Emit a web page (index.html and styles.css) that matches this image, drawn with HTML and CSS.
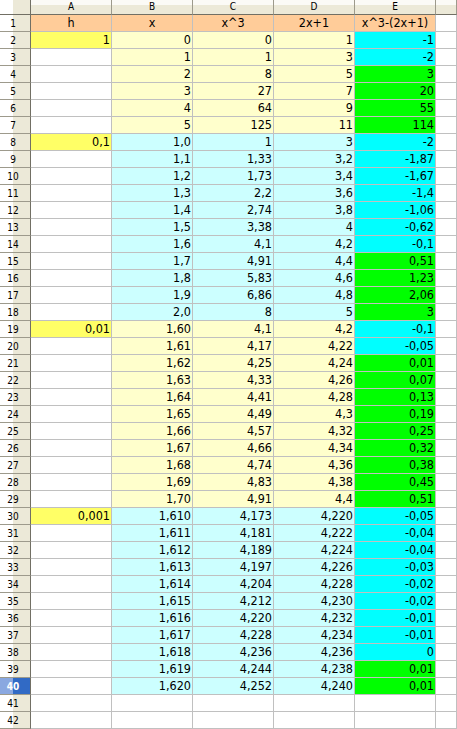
FILE: index.html
```html
<!DOCTYPE html>
<html>
<head>
<meta charset="utf-8">
<link rel="stylesheet" href="styles.css">
</head>
<body>
<div class="sheet">
  <div class="corner"></div><div class="ch">A</div><div class="ch">B</div><div class="ch">C</div><div class="ch">D</div><div class="ch">E</div><div class="ch"></div>

  <div class="rh">1</div><div class="c t or">h</div><div class="c t or">x</div><div class="c t or">x^3</div><div class="c t or">2x+1</div><div class="c t or">x^3-(2x+1)</div><div class="c"></div>

  <div class="rh">2</div><div class="c ye">1</div><div class="c ly">0</div><div class="c ly">0</div><div class="c ly">1</div><div class="c cy">-1</div><div class="c"></div>
  <div class="rh">3</div><div class="c"></div><div class="c ly">1</div><div class="c ly">1</div><div class="c ly">3</div><div class="c cy">-2</div><div class="c"></div>
  <div class="rh">4</div><div class="c"></div><div class="c ly">2</div><div class="c ly">8</div><div class="c ly">5</div><div class="c gr">3</div><div class="c"></div>
  <div class="rh">5</div><div class="c"></div><div class="c ly">3</div><div class="c ly">27</div><div class="c ly">7</div><div class="c gr">20</div><div class="c"></div>
  <div class="rh">6</div><div class="c"></div><div class="c ly">4</div><div class="c ly">64</div><div class="c ly">9</div><div class="c gr">55</div><div class="c"></div>
  <div class="rh">7</div><div class="c"></div><div class="c ly">5</div><div class="c ly">125</div><div class="c ly">11</div><div class="c gr">114</div><div class="c"></div>

  <div class="rh">8</div><div class="c ye">0,1</div><div class="c lc">1,0</div><div class="c lc">1</div><div class="c lc">3</div><div class="c cy">-2</div><div class="c"></div>
  <div class="rh">9</div><div class="c"></div><div class="c lc">1,1</div><div class="c lc">1,33</div><div class="c lc">3,2</div><div class="c cy">-1,87</div><div class="c"></div>
  <div class="rh">10</div><div class="c"></div><div class="c lc">1,2</div><div class="c lc">1,73</div><div class="c lc">3,4</div><div class="c cy">-1,67</div><div class="c"></div>
  <div class="rh">11</div><div class="c"></div><div class="c lc">1,3</div><div class="c lc">2,2</div><div class="c lc">3,6</div><div class="c cy">-1,4</div><div class="c"></div>
  <div class="rh">12</div><div class="c"></div><div class="c lc">1,4</div><div class="c lc">2,74</div><div class="c lc">3,8</div><div class="c cy">-1,06</div><div class="c"></div>
  <div class="rh">13</div><div class="c"></div><div class="c lc">1,5</div><div class="c lc">3,38</div><div class="c lc">4</div><div class="c cy">-0,62</div><div class="c"></div>
  <div class="rh">14</div><div class="c"></div><div class="c lc">1,6</div><div class="c lc">4,1</div><div class="c lc">4,2</div><div class="c cy">-0,1</div><div class="c"></div>
  <div class="rh">15</div><div class="c"></div><div class="c lc">1,7</div><div class="c lc">4,91</div><div class="c lc">4,4</div><div class="c gr">0,51</div><div class="c"></div>
  <div class="rh">16</div><div class="c"></div><div class="c lc">1,8</div><div class="c lc">5,83</div><div class="c lc">4,6</div><div class="c gr">1,23</div><div class="c"></div>
  <div class="rh">17</div><div class="c"></div><div class="c lc">1,9</div><div class="c lc">6,86</div><div class="c lc">4,8</div><div class="c gr">2,06</div><div class="c"></div>
  <div class="rh">18</div><div class="c"></div><div class="c lc">2,0</div><div class="c lc">8</div><div class="c lc">5</div><div class="c gr">3</div><div class="c"></div>

  <div class="rh">19</div><div class="c ye">0,01</div><div class="c ly">1,60</div><div class="c ly">4,1</div><div class="c ly">4,2</div><div class="c cy">-0,1</div><div class="c"></div>
  <div class="rh">20</div><div class="c"></div><div class="c ly">1,61</div><div class="c ly">4,17</div><div class="c ly">4,22</div><div class="c cy">-0,05</div><div class="c"></div>
  <div class="rh">21</div><div class="c"></div><div class="c ly">1,62</div><div class="c ly">4,25</div><div class="c ly">4,24</div><div class="c gr">0,01</div><div class="c"></div>
  <div class="rh">22</div><div class="c"></div><div class="c ly">1,63</div><div class="c ly">4,33</div><div class="c ly">4,26</div><div class="c gr">0,07</div><div class="c"></div>
  <div class="rh">23</div><div class="c"></div><div class="c ly">1,64</div><div class="c ly">4,41</div><div class="c ly">4,28</div><div class="c gr">0,13</div><div class="c"></div>
  <div class="rh">24</div><div class="c"></div><div class="c ly">1,65</div><div class="c ly">4,49</div><div class="c ly">4,3</div><div class="c gr">0,19</div><div class="c"></div>
  <div class="rh">25</div><div class="c"></div><div class="c ly">1,66</div><div class="c ly">4,57</div><div class="c ly">4,32</div><div class="c gr">0,25</div><div class="c"></div>
  <div class="rh">26</div><div class="c"></div><div class="c ly">1,67</div><div class="c ly">4,66</div><div class="c ly">4,34</div><div class="c gr">0,32</div><div class="c"></div>
  <div class="rh">27</div><div class="c"></div><div class="c ly">1,68</div><div class="c ly">4,74</div><div class="c ly">4,36</div><div class="c gr">0,38</div><div class="c"></div>
  <div class="rh">28</div><div class="c"></div><div class="c ly">1,69</div><div class="c ly">4,83</div><div class="c ly">4,38</div><div class="c gr">0,45</div><div class="c"></div>
  <div class="rh">29</div><div class="c"></div><div class="c ly">1,70</div><div class="c ly">4,91</div><div class="c ly">4,4</div><div class="c gr">0,51</div><div class="c"></div>

  <div class="rh">30</div><div class="c ye">0,001</div><div class="c lc">1,610</div><div class="c lc">4,173</div><div class="c lc">4,220</div><div class="c cy">-0,05</div><div class="c"></div>
  <div class="rh">31</div><div class="c"></div><div class="c lc">1,611</div><div class="c lc">4,181</div><div class="c lc">4,222</div><div class="c cy">-0,04</div><div class="c"></div>
  <div class="rh">32</div><div class="c"></div><div class="c lc">1,612</div><div class="c lc">4,189</div><div class="c lc">4,224</div><div class="c cy">-0,04</div><div class="c"></div>
  <div class="rh">33</div><div class="c"></div><div class="c lc">1,613</div><div class="c lc">4,197</div><div class="c lc">4,226</div><div class="c cy">-0,03</div><div class="c"></div>
  <div class="rh">34</div><div class="c"></div><div class="c lc">1,614</div><div class="c lc">4,204</div><div class="c lc">4,228</div><div class="c cy">-0,02</div><div class="c"></div>
  <div class="rh">35</div><div class="c"></div><div class="c lc">1,615</div><div class="c lc">4,212</div><div class="c lc">4,230</div><div class="c cy">-0,02</div><div class="c"></div>
  <div class="rh">36</div><div class="c"></div><div class="c lc">1,616</div><div class="c lc">4,220</div><div class="c lc">4,232</div><div class="c cy">-0,01</div><div class="c"></div>
  <div class="rh">37</div><div class="c"></div><div class="c lc">1,617</div><div class="c lc">4,228</div><div class="c lc">4,234</div><div class="c cy">-0,01</div><div class="c"></div>
  <div class="rh">38</div><div class="c"></div><div class="c lc">1,618</div><div class="c lc">4,236</div><div class="c lc">4,236</div><div class="c cy">0</div><div class="c"></div>
  <div class="rh">39</div><div class="c"></div><div class="c lc">1,619</div><div class="c lc">4,244</div><div class="c lc">4,238</div><div class="c gr">0,01</div><div class="c"></div>
  <div class="rh sel">40</div><div class="c"></div><div class="c lc">1,620</div><div class="c lc">4,252</div><div class="c lc">4,240</div><div class="c gr">0,01</div><div class="c"></div>

  <div class="rh">41</div><div class="c"></div><div class="c"></div><div class="c"></div><div class="c"></div><div class="c"></div><div class="c"></div>
  <div class="rh">42</div><div class="c"></div><div class="c"></div><div class="c"></div><div class="c"></div><div class="c"></div><div class="c"></div>
</div>
</body>
</html>
```

FILE: styles.css
```css
html, body {
  margin: 0;
  padding: 0;
  background: #ffffff;
}

.sheet {
  display: grid;
  grid-template-columns: 31px repeat(5, 81px) 1fr;
  grid-template-rows: 15px;
  grid-auto-rows: 17px;
  width: 457px;
  font-family: "DejaVu Sans Condensed", "DejaVu Sans", sans-serif;
  font-stretch: condensed;
  color: #000000;
}

.corner,
.ch {
  box-sizing: border-box;
  border-right: 1px solid #9d9a8c;
  border-bottom: 1px solid #716f64;
  background: linear-gradient(to bottom, #fbfaf6 0, #fbfaf6 5px, #ece9d8 5px);
  font-size: 10px;
  line-height: 14px;
  text-align: center;
}

.corner {
  border-right-color: #716f64;
  background: linear-gradient(to right, #ffffff 0, #ffffff 13px, #ece9d8 13px);
}

.rh {
  box-sizing: border-box;
  border-right: 1px solid #716f64;
  border-bottom: 1px solid #9d9a8c;
  background: linear-gradient(to right, #ffffff 0, #ffffff 13px, #ece9d8 13px);
  font-size: 10px;
  line-height: 16px;
  padding: 1px 4px 0 0;
  text-align: center;
}

.rh.sel {
  background: linear-gradient(to right, #8aa8e0 0, #8aa8e0 13px, #316ac5 13px);
  color: #ffffff;
  font-weight: bold;
}

.c {
  box-sizing: border-box;
  border-right: 1px solid #c0c0c0;
  border-bottom: 1px solid #c0c0c0;
  font-size: 12.5px;
  line-height: 16px;
  text-align: right;
  padding-right: 1px;
  white-space: nowrap;
  overflow: hidden;
}

.c.t { text-align: center; padding-right: 0; }

.or { background: #ffcc99; }
.ye { background: #ffff66; }
.ly { background: #ffffcc; }
.lc { background: #ccffff; }
.cy { background: #00ffff; }
.gr { background: #00ff00; }
```
